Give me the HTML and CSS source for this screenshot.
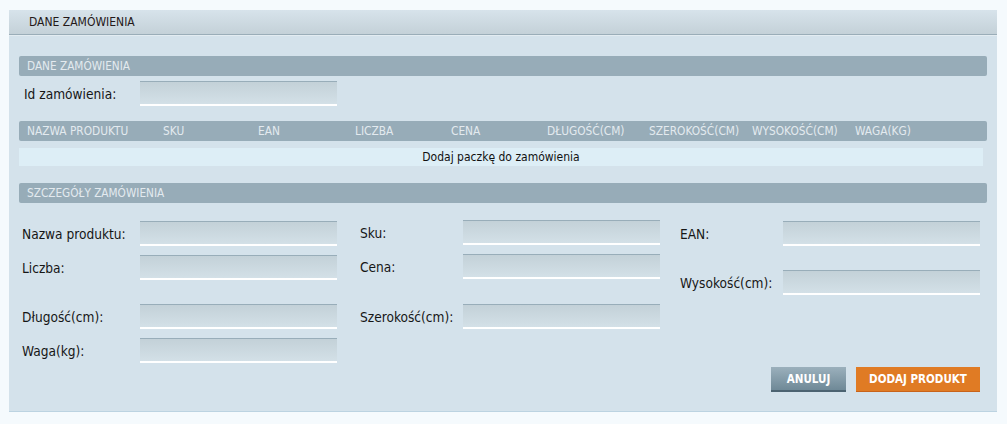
FILE: index.html
```html
<!DOCTYPE html>
<html lang="pl">
<head>
<meta charset="utf-8">
<title>Dane zamówienia</title>
<link rel="stylesheet" href="styles.css">
</head>
<body>
<div class="panel">
  <div class="panel-head">DANE ZAMÓWIENIA</div>
  <div class="panel-body">
    <div class="bar bar-first">DANE ZAMÓWIENIA</div>
    <div class="id-row">
      <span class="label id-label">Id zamówienia:</span>
      <div class="input"></div>
    </div>
    <div class="thead">
      <span class="th th-name">NAZWA PRODUKTU</span>
      <span class="th th-sku">SKU</span>
      <span class="th th-ean">EAN</span>
      <span class="th th-qty">LICZBA</span>
      <span class="th th-price">CENA</span>
      <span class="th th-len">DŁUGOŚĆ(CM)</span>
      <span class="th th-wid">SZEROKOŚĆ(CM)</span>
      <span class="th th-hei">WYSOKOŚĆ(CM)</span>
      <span class="th th-wei">WAGA(KG)</span>
    </div>
    <div class="empty-row">Dodaj paczkę do zamówienia</div>
    <div class="bar bar-second">SZCZEGÓŁY ZAMÓWIENIA</div>
    <div class="fields">
      <div class="col col-1">
        <div class="field"><span class="label">Nazwa produktu:</span><div class="input"></div></div>
        <div class="field"><span class="label">Liczba:</span><div class="input"></div></div>
        <div class="field field-far"><span class="label">Długość(cm):</span><div class="input"></div></div>
        <div class="field"><span class="label">Waga(kg):</span><div class="input"></div></div>
      </div>
      <div class="col col-2">
        <div class="field field-up"><span class="label">Sku:</span><div class="input"></div></div>
        <div class="field"><span class="label">Cena:</span><div class="input"></div></div>
        <div class="field field-far2"><span class="label">Szerokość(cm):</span><div class="input"></div></div>
      </div>
      <div class="col col-3">
        <div class="field"><span class="label">EAN:</span><div class="input"></div></div>
        <div class="field field-far"><span class="label">Wysokość(cm):</span><div class="input"></div></div>
      </div>
    </div>
    <div class="actions">
      <button class="btn btn-cancel" type="button">ANULUJ</button>
      <button class="btn btn-add" type="button">DODAJ PRODUKT</button>
    </div>
  </div>
</div>
</body>
</html>
```
FILE: styles.css
```css
* { box-sizing: border-box; }

html, body {
  margin: 0;
  padding: 0;
  background: #f5fafd;
}

body {
  font-family: "DejaVu Sans Condensed", "DejaVu Sans", sans-serif;
  font-stretch: condensed;
  color: #1c1c1c;
}

.panel {
  margin: 10px 0 0 9px;
  width: 988px;
  background: #d4e2eb;
  border-bottom: 1px solid #bcd3e1;
}

.panel-head {
  height: 25px;
  padding-left: 20px;
  line-height: 24px;
  font-size: 12px;
  color: #241818;
  background: linear-gradient(#d7e3eb, #c4d1d8);
  border-bottom: 1px solid #9aadb8;
  box-shadow: 0 1px 0 #e3ecf1;
}

.panel-body {
  padding: 0 10px 19px 10px;
}

.bar {
  height: 20px;
  padding-left: 8px;
  line-height: 20px;
  font-size: 11.7px;
  color: #e3eaef;
  background: #97acb8;
  border-radius: 2px;
}

.bar-first { margin-top: 21px; }
.bar-second { margin-top: 17px; }

.id-row {
  display: flex;
  align-items: center;
  margin-top: 5px;
}

.label {
  font-size: 13.6px;
  color: #161616;
  white-space: nowrap;
}

.id-label {
  width: 121px;
  padding-left: 5px;
}

.input {
  width: 197px;
  height: 25px;
  flex: none;
  background: linear-gradient(#c3d1d8, #d3e0e7);
  border-top: 1px solid #98adb9;
  border-bottom: 2px solid #ffffff;
}

.thead {
  display: flex;
  height: 20px;
  margin-top: 15px;
  padding-left: 8px;
  line-height: 20px;
  font-size: 11.8px;
  color: #e3eaef;
  background: #97acb8;
  border-radius: 2px;
}

.th { white-space: nowrap; flex: none; }
.th-name { width: 136px; }
.th-sku { width: 95px; }
.th-ean { width: 97px; }
.th-qty { width: 96px; }
.th-price { width: 96px; }
.th-len { width: 102px; }
.th-wid { width: 103px; }
.th-hei { width: 103px; }
.th-wei { width: 100px; }

.empty-row {
  height: 18px;
  margin: 7px 4px 0 0;
  line-height: 18px;
  text-align: center;
  font-size: 12px;
  color: #111;
  background: #ddeef6;
}

.fields {
  display: grid;
  grid-template-columns: 315px 323px 320px;
  margin-top: 18px;
  padding-left: 3px;
}

.col {
  display: flex;
  flex-direction: column;
  gap: 9px;
}

.col-2 { padding-left: 23px; }
.col-3 { padding-left: 20px; }

.field {
  display: flex;
  align-items: center;
  justify-content: space-between;
}

.field-far { margin-top: 15px; }
.field-far2 { margin-top: 16px; }
.field-up { margin-top: -1px; }

.actions {
  display: flex;
  justify-content: flex-end;
  gap: 10px;
  margin-top: 4px;
  padding-right: 7px;
}

.btn {
  height: 25px;
  padding: 0;
  border: 0;
  font-family: "DejaVu Sans Condensed", "DejaVu Sans", sans-serif;
  font-stretch: condensed;
  font-weight: bold;
  font-size: 11.5px;
  color: #ffffff;
  cursor: pointer;
}

.btn-cancel {
  width: 75px;
  background: linear-gradient(#9bb0bc, #6f8997);
  border-bottom: 2px solid #4c6371;
}

.btn-add {
  width: 124px;
  background: #e07b24;
  border-bottom: 1px solid #c8631a;
}
```
